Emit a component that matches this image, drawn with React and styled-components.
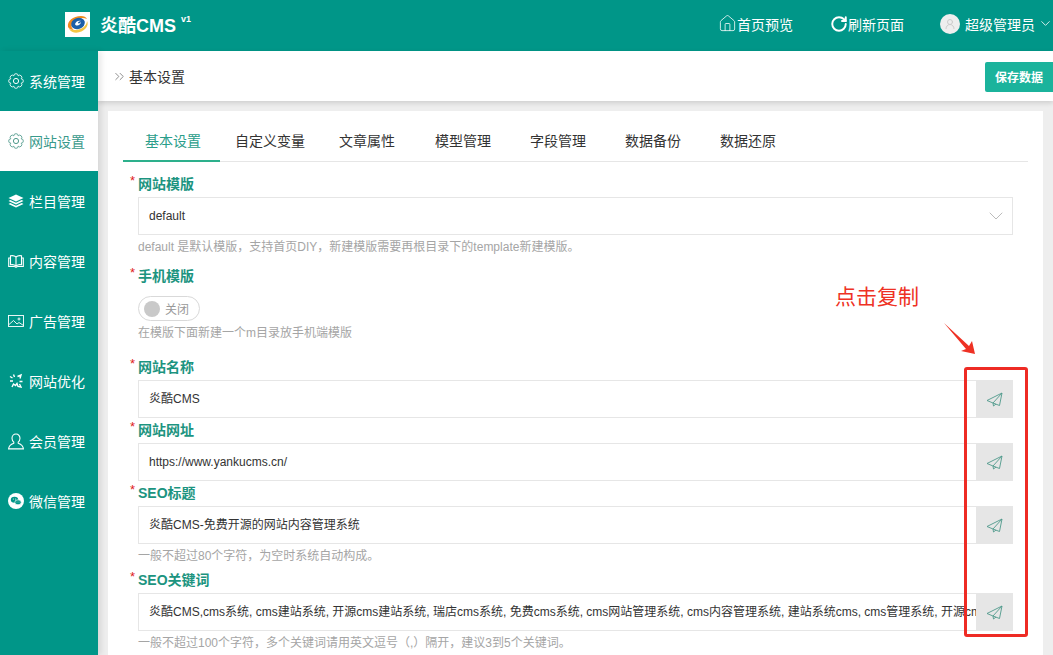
import React from 'react';
import styled, { createGlobalStyle } from 'styled-components';
import { ChevronDown, ChevronsRight, Home, RotateCw, UserRound } from 'lucide-react';

const Global = createGlobalStyle`
  html, body { margin: 0; padding: 0; background: #eee; }
  body { font-family: "Liberation Sans", "Noto Sans CJK SC", sans-serif; overflow: hidden; }
  * { box-sizing: border-box; }
`;
const Page = styled.div`position: relative; width: 1053px; height: 655px; overflow: hidden; display: flex; flex-direction: column;`;
const Header = styled.header`height: 51px; flex: none; background: #009688; color: #fff; display: flex; align-items: center; padding: 0 2px 2px 65px;`;
const LogoBox = styled.div`width: 25px; height: 25px; background: #fff; margin-right: 10px; display: flex;`;
const Title = styled.div`font-size: 18px; font-weight: 700; padding-bottom: 2px;`;
const Version = styled.sup`font-size: 9px; font-weight: 700; margin-left: 5px; position: relative; top: -3px; line-height: 0;`;
const HeaderNav = styled.nav`margin-left: auto; display: flex; align-items: center; font-size: 14px; padding-bottom: 2px;`;
const NavLink = styled.div`display: flex; align-items: center; margin-left: ${p => p.$ml || 0}px;`;
const Avatar = styled.div`width: 20px; height: 20px; border-radius: 50%; background: #eee; color: #ccc; display: flex; align-items: center; justify-content: center; margin-right: 5px;`;
const HeaderChevron = styled(ChevronDown)`margin: 0 -2px 0 3px;`;
const Body = styled.div`flex: 1; display: flex; min-height: 0;`;
const Sidebar = styled.aside`width: 98px; flex: none; background: #009688; box-shadow: 3px 0 6px rgba(0,0,0,.1); z-index: 2;`;
const MenuItem = styled.div`height: 60px; display: flex; align-items: center; gap: 5px; padding-left: 8px; font-size: 14px; color: ${p => p.$active ? '#3a9a8c' : '#fff'}; background: ${p => p.$active ? '#fff' : 'transparent'};`;
const Main = styled.main`flex: 1; min-width: 0; display: flex; flex-direction: column;`;
const Crumb = styled.div`height: 50px; flex: none; background: #fff; box-shadow: 0 2px 5px rgba(0,0,0,.14); display: flex; align-items: center; padding-left: 14px; font-size: 14px; color: #333; gap: 2px; z-index: 1;`;
const SaveButton = styled.button`margin-left: auto; margin-top: 1px; width: 68px; height: 30px; border: 0; border-radius: 2px 0 0 2px; background: #1bb39c; color: #fff; font: 700 12px "Liberation Sans", "Noto Sans CJK SC", sans-serif; padding: 0;`;
const Card = styled.section`margin: 10px 10px 0; background: #fff; flex: 1; padding: 10px 15px 0; min-height: 0; overflow: hidden;`;
const Tabs = styled.div`display: flex; height: 41px; border-bottom: 1px solid #e6e6e6;`;
const Tab = styled.div`width: ${p => p.$w}px; height: 41px; display: flex; align-items: center; padding: 0 0 ${p => p.$active ? 1 : 3}px ${p => p.$pl}px; font-size: 14px; color: ${p => p.$active ? '#2a9d8a' : '#333'}; border-bottom: ${p => p.$active ? '2px solid #2db08c' : '0'};`;
const Form = styled.div`padding: 12px 15px 0;`;
const Field = styled.div`margin-bottom: ${p => p.$mb ?? 2}px;`;
const Label = styled.label`position: relative; display: block; height: 20px; line-height: 20px; margin-bottom: 3px; font-size: 14px; font-weight: 700; color: #1c9480;
  &::before { content: "*"; position: absolute; left: -8px; top: -3px; color: #e02020; font-weight: 400; font-size: 13px; }`;
const InputRow = styled.div`display: flex; width: 875px; height: 38px; border: 1px solid #e6e6e6; background: #fff; align-items: stretch;`;
const InputText = styled.div`flex: 1; min-width: 0; padding-left: 10px; font-size: 12px; line-height: 36px; color: #333; white-space: nowrap; overflow: hidden;`;
const SelectText = styled(InputText)`display: flex; justify-content: space-between; align-items: center; padding-right: 4px;`;
const Addon = styled.div`width: 37px; flex: none; margin: -1px -1px -1px 0; background: #e6e6e6; display: flex; align-items: center; justify-content: center;`;
const Help = styled.div`height: 20px; line-height: 20px; margin-top: 2px; font-size: 12px; color: #a5a5a5; white-space: nowrap;`;
const Switch = styled.div`margin: 10px 0 2px; width: 62px; height: 25px; border: 1px solid #d9d9d9; border-radius: 13px; display: flex; align-items: center; gap: 5px; padding-left: 5px; font-size: 12px; color: #999;
  &::before { content: ""; width: 16px; height: 16px; border-radius: 50%; background: #c9c9c9; }`;
const Overlay = styled.div`position: absolute; color: #ee3124; pointer-events: none;`;
const Note = styled(Overlay)`left: 835px; top: 284px; font-size: 21px; line-height: 26px; font-weight: 400;`;
const RedBox = styled(Overlay)`left: 964px; top: 367px; width: 64px; height: 270px; border: 3px solid #ee2b24; border-radius: 3px;`;
const Arrow = styled.svg`position: absolute; left: 942px; top: 322px;`;

const Logo = () => (
  <svg width="25" height="25" viewBox="0 0 25 25">
    <path d="M3 15C2 9 8 4 16 4c3 0 5 1 6 3-4-2-11-1-14 3-2 3-2 6 1 8-3 0-5-1-6-3z" fill="#f08a1d" />
    <path d="M4 17c3 5 12 5 17-1 2-3 2-5 1-7 0 5-6 9-12 9-2 0-4 0-6-1z" fill="#f3c544" />
    <ellipse cx="13" cy="11.5" rx="7" ry="5.5" fill="#1c5fa8" transform="rotate(-18 13 11.5)" />
    <path d="M10 12c1-3 4-4 6-3-2 0-3 1-3 2 1 1 2 0 3-1 0 3-5 5-6 2z" fill="#fff" />
  </svg>
);

// Scalloped eight-petal gear outline, as in the reference's menu icon.
const gearPath = (() => {
  const n = 8, R = 6.6;
  const pts = Array.from({ length: n }, (_, i) => {
    const a = (i + 0.5) * 2 * Math.PI / n;
    return [(8 + R * Math.cos(a)).toFixed(2), (8 + R * Math.sin(a)).toFixed(2)];
  });
  return `M${pts[0].join(' ')}` + pts.slice(1).concat([pts[0]]).map(p => `A2.3 2.3 0 1 1 ${p.join(' ')}`).join('') + 'Z';
})();
const Gear = ({ color = '#fff' }) => (
  <svg width="16" height="16" viewBox="0 0 16 16" fill="none" stroke={color} strokeWidth="1">
    <path d={gearPath} transform="translate(8 8) scale(.85) translate(-8 -8)" />
    <circle cx="8" cy="8" r="2.6" />
  </svg>
);
const Layers = () => (
  <svg width="16" height="16" viewBox="0 0 16 16" fill="#fff">
    <path d="M8 1.5 15.5 5 8 8.5.5 5z" />
    <path d="M2.3 7 8 9.7 13.7 7l1.8.9L8 11.4.5 7.9z" />
    <path d="M2.3 10 8 12.7 13.7 10l1.8.9L8 14.5.5 10.9z" />
  </svg>
);
const Book = () => (
  <svg width="16" height="16" viewBox="0 0 16 16" fill="none" stroke="#fff" strokeWidth="1.1">
    <path d="M8 4C6.5 2.6 4.5 2.4 2.5 2.8v9C4.5 11.4 6.5 11.6 8 13c1.5-1.4 3.5-1.6 5.5-1.2v-9C11.500 2.400 9.500 2.600 8 4zM8 4v9" />
    <path d="M2.500 5H.7v8.500H6c.8 0 1.500.3 2 .8.500-.5 1.200-.8 2-.8h5.300V5h-1.800" />
  </svg>
);
const Picture = () => (
  <svg width="16" height="16" viewBox="0 0 16 16" fill="none" stroke="#fff" strokeWidth=".9">
    <rect x=".5" y="2.500" width="15" height="11" />
    <path d="M1 11.500 5.500 7.500 9 11l2-1.500 4.500 3" />
    <circle cx="11" cy="6" r="1" />
  </svg>
);
const Burst = () => (
  <svg width="16" height="16" viewBox="0 0 16 16" fill="none" stroke="#fff" strokeWidth="1.4">
    <path d="M2 3.500 4.500 5M5.500 1.500 6.500 4M9.500 3.500 13 2 12 5.500M2 8h3M14.500 8.500h-3M4 14l1.500-3 2 1.500 1.500-2 1 3 3 .5-1.500-3" />
  </svg>
);
const Member = () => (
  <svg width="16" height="17" viewBox="0 0 16 17" fill="none" stroke="#fff" strokeWidth="1.1">
    <path d="M8 1C5.500 1 4 3 4 5.300c0 1.700.8 3 1.800 3.800v1.100C3.500 11 .8 12.500.6 15.900h14.800c-.2-3.400-2.900-4.900-5.200-5.700V9.100C11.200 8.300 12 7 12 5.300 12 3 10.500 1 8 1z" />
  </svg>
);
const WeChat = () => (
  <svg width="16" height="16" viewBox="0 0 16 16">
    <circle cx="8" cy="8" r="8" fill="#fff" />
    <ellipse cx="6.500" cy="6.700" rx="3.700" ry="3" fill="#009688" />
    <ellipse cx="10" cy="9.300" rx="3.200" ry="2.500" fill="#009688" stroke="#fff" strokeWidth=".7" />
    <circle cx="5.300" cy="6" r=".5" fill="#fff" /><circle cx="7.600" cy="6" r=".5" fill="#fff" />
    <circle cx="9" cy="9" r=".4" fill="#fff" /><circle cx="11" cy="9" r=".4" fill="#fff" />
  </svg>
);
const Plane = () => (
  <svg width="17" height="15" viewBox="0 0 17 15" fill="none" stroke="#4f9a8b" strokeWidth=".9" strokeLinejoin="round">
    <path d="M16 1 1 8.500l6 2.500zM16 1l-2.500 12.500L7 11l.5 3 2.500-2" />
  </svg>
);

const menu = [
  ['系统管理', <Gear />],
  ['网站设置', <Gear color="#4f9a8b" />, true],
  ['栏目管理', <Layers />],
  ['内容管理', <Book />],
  ['广告管理', <Picture />],
  ['网站优化', <Burst />],
  ['会员管理', <Member />],
  ['微信管理', <WeChat />],
];
const tabs = [['基本设置', 97, 22, true], ['自定义变量', 104, 15], ['文章属性', 96, 15], ['模型管理', 95, 15], ['字段管理', 95, 15], ['数据备份', 95, 15], ['数据还原', 95, 15]];
const keywords = '炎酷CMS,cms系统, cms建站系统, 开源cms建站系统, 瑞店cms系统, 免费cms系统, cms网站管理系统, cms内容管理系统, 建站系统cms, cms管理系统, 开源cms';

const CopyField = ({ label, value, help, mb }) => (
  <Field $mb={mb}>
    <Label>{label}</Label>
    <InputRow>
      <InputText>{value}</InputText>
      <Addon><Plane /></Addon>
    </InputRow>
    {help && <Help>{help}</Help>}
  </Field>
);

export default function App() {
  return (
    <Page>
      <Global />
      <Header>
        <LogoBox><Logo /></LogoBox>
        <Title>炎酷CMS<Version>v1</Version></Title>
        <HeaderNav>
          <NavLink><Home size={19} strokeWidth={1} />首页预览</NavLink>
          <NavLink $ml={37}><RotateCw size={18} strokeWidth={2.6} />刷新页面</NavLink>
          <NavLink $ml={36}>
            <Avatar><UserRound size={12} /></Avatar>超级管理员
            <HeaderChevron size={15} strokeWidth={1.3} />
          </NavLink>
        </HeaderNav>
      </Header>
      <Body>
        <Sidebar>
          {menu.map(([name, icon, active]) => <MenuItem key={name} $active={active}>{icon}{name}</MenuItem>)}
        </Sidebar>
        <Main>
          <Crumb>
            <ChevronsRight size={15} strokeWidth={1.5} color="#888" />基本设置
            <SaveButton>保存数据</SaveButton>
          </Crumb>
          <Card>
            <Tabs>{tabs.map(([t, w, pl, a]) => <Tab key={t} $w={w} $pl={pl} $active={a}>{t}</Tab>)}</Tabs>
            <Form>
              <Field $mb={9}>
                <Label>网站模版</Label>
                <InputRow>
                  <SelectText>default<ChevronDown size={24} strokeWidth={.8} color="#aaa" /></SelectText>
                </InputRow>
                <Help>default 是默认模版，支持首页DIY，新建模版需要再根目录下的template新建模版。</Help>
              </Field>
              <Field $mb={14}>
                <Label>手机模版</Label>
                <Switch>关闭</Switch>
                <Help>在模版下面新建一个m目录放手机端模版</Help>
              </Field>
              <CopyField label="网站名称" value="炎酷CMS" />
              <CopyField label="网站网址" value="https://www.yankucms.cn/" />
              <CopyField label="SEO标题" value="炎酷CMS-免费开源的网站内容管理系统" help="一般不超过80个字符，为空时系统自动构成。" mb={4} />
              <CopyField label="SEO关键词" value={keywords} help="一般不超过100个字符，多个关键词请用英文逗号（,）隔开，建议3到5个关键词。" />
            </Form>
          </Card>
        </Main>
      </Body>
      <Note>点击复制</Note>
      <Arrow width="36" height="34" viewBox="0 0 36 34">
        <path d="M2 1 27 24l3-5 3 13-14-3 5-2z" fill="#ee3124" />
      </Arrow>
      <RedBox />
    </Page>
  );
}
